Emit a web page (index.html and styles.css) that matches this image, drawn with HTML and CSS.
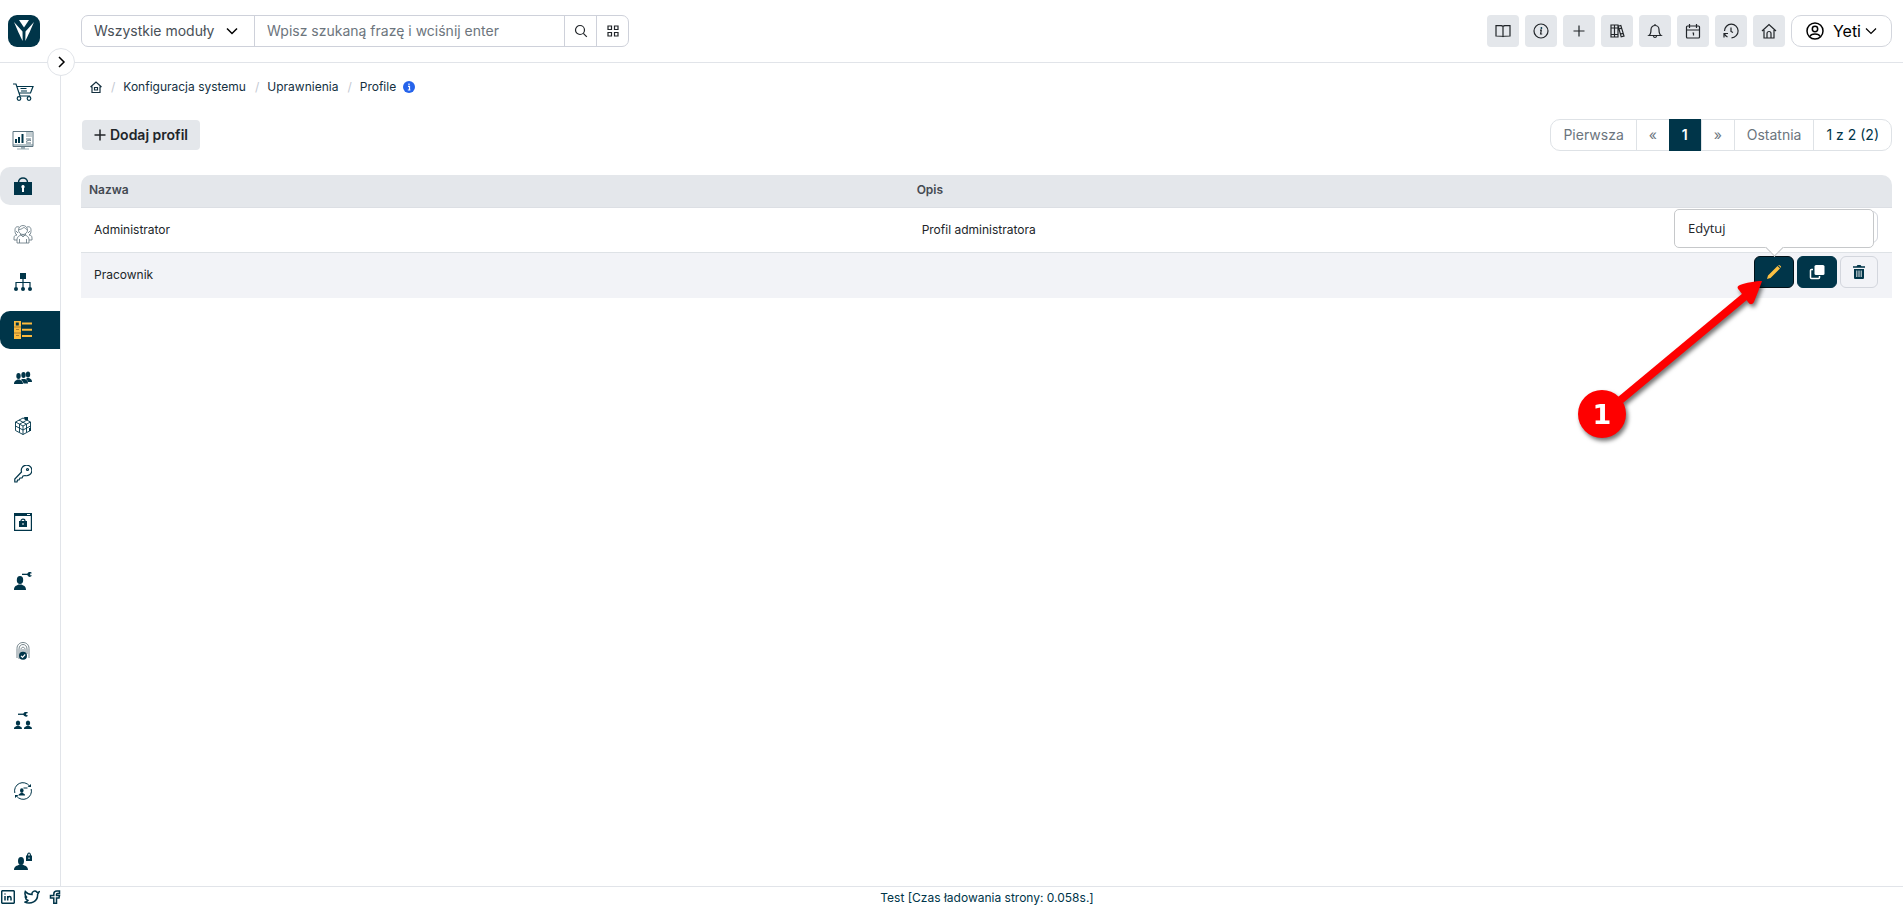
FILE: index.html
```html
<!DOCTYPE html>
<html lang="pl">
<head>
<meta charset="utf-8">
<title>Profile - Yeti</title>
<link rel="stylesheet" href="styles.css">
</head>
<body>
<header class="topbar">
  <a class="brand" href="#" aria-label="Yeti">
    <svg viewBox="0 0 32 32" width="32" height="32"><rect width="32" height="32" rx="9" fill="#003549"/><path d="M11 5h10l-5 7.500z" fill="#fff"/><path d="M6 7l8.500 9.500.2 9.500C12 21 8.500 13 6 7zM26 7l-8.500 9.500-.2 9.500C20 21 23.500 13 26 7z" fill="#fff"/></svg>
  </a>
  <form class="search">
    <div class="select-wrap">
      <select aria-label="Moduł"><option>Wszystkie moduły</option></select>
      <svg class="select-arrow" viewBox="0 0 12 12" width="12" height="12"><path d="M1 3.500l5 5 5-5" class="ln"/></svg>
    </div>
    <input type="text" aria-label="Szukaj" placeholder="Wpisz szukaną frazę i wciśnij enter">
    <button type="button" aria-label="Szukaj"><svg viewBox="0 0 14 14" width="14" height="14"><circle cx="6" cy="6" r="4.500" class="ln thin"/><path d="M9.300 9.300l3.500 3.500" class="ln thin"/></svg></button>
    <button type="button" aria-label="Zaawansowane"><svg viewBox="0 0 12 12" width="12" height="12"><path d="M1 1h3.500v3.500H1zM7.500 1H11v3.500H7.500zM1 7.500h3.500V11H1zM7.500 7.500H11V11H7.500z" class="ln thin"/></svg></button>
  </form>
  <div class="tools">
    <button type="button" aria-label="Podręcznik"><svg viewBox="0 0 16 16" width="16" height="16"><path d="M8 3.500V13.500M8 3.500C7.500 2.500 7 2.500 1 2.500v10.500c6 0 6.500 0 7 .5.500-.5 1-.5 7-.5V2.500C9 2.500 8.500 2.500 8 3.500z" class="ln thin"/></svg></button>
    <button type="button" aria-label="Informacje"><svg viewBox="0 0 16 16" width="16" height="16"><circle cx="8" cy="8" r="7" class="ln thin"/><path d="M7 7.200h1.300L7.600 11h1.600" class="ln thin"/><circle cx="8.400" cy="5" r=".9"/></svg></button>
    <button type="button" aria-label="Dodaj"><svg viewBox="0 0 16 16" width="16" height="16"><path d="M8 2.500v11M2.500 8h11" class="ln thin"/></svg></button>
    <button type="button" aria-label="Biblioteka"><svg viewBox="0 0 16 16" width="16" height="16"><path d="M2 2h3.500v12H2zM5.500 2H9v12H5.500zM2 5h7M2 11.500h7M9.200 3.200l2.600-.8L15 13l-2.800.8zM10 6l2.700-.8M11.200 11.200l3-.8" class="ln thin"/></svg></button>
    <button type="button" aria-label="Powiadomienia"><svg viewBox="0 0 16 16" width="16" height="16"><path d="M2 12.500c2-1.500 2-3 2-6a4 4 0 018 0c0 3 0 4.500 2 6zM6.500 13c.2 2 2.800 2 3 0M8 2.500V1" class="ln thin"/></svg></button>
    <button type="button" aria-label="Kalendarz"><svg viewBox="0 0 16 16" width="16" height="16"><rect x="1.500" y="3" width="13" height="12" rx="1" class="ln thin"/><path d="M1.500 7h13M4.500 1v4M11.500 1v4M7.500 10h1v2.500" class="ln thin"/></svg></button>
    <button type="button" aria-label="Historia"><svg viewBox="0 0 16 16" width="16" height="16"><path d="M1.500 8A6.800 6.800 0 118.500 14.800M8 4.500V8.500l2 1M1 14.500V10.500h4M1.500 11c.7 1.500 1.500 2.300 3 3" class="ln thin"/></svg></button>
    <button type="button" aria-label="Strona główna"><svg viewBox="0 0 16 16" width="16" height="16"><path d="M1 8l7-6.500L15 8M3 7v8h10V7M6 15v-4.500a2 2 0 014 0V15" class="ln thin"/></svg></button>
    <button type="button" class="user">
      <svg viewBox="0 0 18 18" width="18" height="18"><circle cx="9" cy="9" r="8" class="ln"/><circle cx="9" cy="7" r="2.700" class="ln"/><path d="M4 14.500c1-3.500 9-3.500 10 0" class="ln"/></svg>
      <span>Yeti</span>
      <svg class="caret" viewBox="0 0 12 12" width="12" height="12"><path d="M1 3.500l5 5 5-5" class="ln thin"/></svg>
    </button>
  </div>
</header>
<div class="body">
  <nav class="sidebar" aria-label="Menu">
    <button type="button" class="expand" aria-label="Rozwiń menu"><svg viewBox="0 0 12 12" width="12" height="12"><path d="M4 1l5 5-5 5" class="ln"/></svg></button>
    <a href="#" class="root" aria-label="Sklep"><svg viewBox="0 0 22 20" width="22" height="20"><path d="M1 2h3l4 12h10M5 4.500h16L18.500 11H7M8.500 6.500h6M9 9h6" class="ln thin"/><circle cx="7" cy="16.500" r="1.800" class="ln thin"/><circle cx="17" cy="16.500" r="1.800" class="ln thin"/></svg></a>
    <a href="#" class="root" aria-label="Monitorowanie"><svg viewBox="0 0 22 20" width="22" height="20"><path d="M1 14h20v3H1z" fill="#b3c1c7"/><path d="M14 2h6v5h-6z" fill="#c4ced2"/><path d="M1 1.500h20v15H1z" fill="none" stroke="#5d7480"/><path d="M3 9h2v4H3zM6 7h2v6H6zM9.500 4h2v9h-2z"/><path d="M14 9h5M14 13h5M14 11.500l3-1.500 2 .5" fill="none" stroke="#5d7480"/><path d="M9 17h4v2H9zM5 18.500h12v1H5z" fill="#9aabb3"/></svg></a>
    <a href="#" class="section" aria-label="Bezpieczeństwo"><svg viewBox="0 0 18 18" width="18" height="18"><path d="M0 5h18v13H0z"/><path d="M4.500 5.500c0-6 9-6 9 0" class="ln"/><path d="M9 8a1.800 1.800 0 011 3.200V15H8v-3.800A1.800 1.800 0 019 8z" fill="#fff"/></svg></a>
    <a href="#" aria-label="Użytkownicy"><svg viewBox="0 0 20 20" width="20" height="20"><g fill="none" stroke="#60727c" stroke-width=".8"><circle cx="10" cy="6" r="4.500"/><path d="M6 5.500c3 0 4-2 5-2s2 2 3 2M6 3C3 2 2 4 2 6s0 4 2 5M14 3c3-1 4 1 4 3s0 4-2 5M4 19v-3c0-3 2-5 6-5s6 2 6 5v3zM4 16H1v-2c0-2 1-3 3-3M16 16h3v-2c0-2-1-3-3-3M7 10l3 3 3-3M6.500 15v4M13.500 15v4M3 7l2 2M17 7l-2 2"/></g></svg></a>
    <a href="#" aria-label="Role"><svg viewBox="0 0 18 18" width="18" height="18"><path d="M6 0h6v6H6z"/><path d="M9 6v9M2 14.500V9.500h14v5" class="ln thin"/><circle cx="2" cy="16" r="2"/><circle cx="9" cy="16" r="2"/><circle cx="16" cy="16" r="2"/></svg></a>
    <a href="#" class="current" aria-label="Profile"><svg viewBox="0 0 18 18" width="18" height="18"><path d="M0 0h7v18H0zM8 1.500h10v2H8zM8 7.800h10v2H8zM8 14h10v2H8z" fill="#fbb93d"/><path d="M1.800 1.500h3v3h-3z" fill="#003549"/><path d="M0 6h7M0 12h7M2 8.500h3M2 14.500h3" stroke="#a87c33" fill="none"/></svg></a>
    <a href="#" aria-label="Grupy"><svg viewBox="0 0 18 14" width="18" height="14"><ellipse cx="4.500" cy="5" rx="2.200" ry="3"/><ellipse cx="9.500" cy="4" rx="2.200" ry="3"/><ellipse cx="14" cy="3.500" rx="2.200" ry="3"/><path d="M0 13c0-3 2-3.500 3.500-4.500h2C7 9.500 9 10 9 13zM8 8h3c2 1.200 3 2 3 4.500H9.500C9 10 8 9.500 7 9zM13 7h2c2 1 3 1.500 3 4h-4C13.500 9 12.500 8.500 12 8z"/></svg></a>
    <a href="#" aria-label="Moduły"><svg viewBox="0 0 18 18" width="18" height="18"><path d="M9 1l7.500 4v8.500L9 17.500l-7.500-4V5zM1.500 5L9 9l7.500-4M9 9v8.500M5 3l7.500 4.200v8M13 3L5.500 7.200v8M1.500 9L9 13l7.500-4" fill="none" stroke="#003549" stroke-width=".9"/><path d="M10 0h4v3h-3zM15 11h2v3h-2z"/></svg></a>
    <a href="#" aria-label="Klucze"><svg viewBox="0 0 18 18" width="18" height="18"><path d="M7.500 7A5.300 5.300 0 1111 10.500L9 11l-1 2H6l-1 2H3.500L3 17H.8v-3z" class="ln thin"/><circle cx="13.500" cy="4.500" r="1" class="ln thin"/></svg></a>
    <a href="#" aria-label="Blokady"><svg viewBox="0 0 18 18" width="18" height="18"><path d="M.6.6h16.800v16.800H.6z" class="ln thin"/><path d="M0 0h18v3H0zM5 8h8v6H5z"/><path d="M13 1.500h3" stroke="#fff"/><path d="M7 8c0-2.500 4-2.500 4 0" class="ln thin"/><path d="M8.500 10h1v2h-1z" fill="#fff"/></svg></a>
    <a href="#" class="tall" aria-label="Uprawnienia użytkownika"><svg viewBox="0 0 18 18" width="18" height="18"><ellipse cx="6" cy="8" rx="3.200" ry="4"/><path d="M0 18c0-4 2-4 4.500-5.500h3C10 14 12 14 12 18z"/><path d="M8 1.700h6v1.300H8z"/><path d="M18 1.200a2.500 2.500 0 100 2.400l-1.800-.4V1.600z"/></svg></a>
    <a href="#" class="tall" aria-label="Autoryzacja"><svg viewBox="0 0 14 18" width="14" height="18"><g fill="none" stroke="#687981" stroke-width=".9"><path d="M1 16V6.500c0-8 12-8 12 0V16M3 17V7c0-6 8-6 8 0v5M5 12V7.500c0-3 4-3 4 0V11M7 11V7"/></g><circle cx="7" cy="13.800" r="4"/><path d="M5 13.800l1.500 1.500L9.200 12.500" fill="none" stroke="#fff" stroke-width="1.200"/></svg></a>
    <a href="#" class="tall" aria-label="Dostęp grup"><svg viewBox="0 0 18 18" width="18" height="18"><path d="M4 1.600h7v1.300H4z"/><path d="M14 1a2.400 2.400 0 100 2.400l-1.800-.4V1.400z"/><ellipse cx="4" cy="11" rx="2.200" ry="2.500"/><ellipse cx="14" cy="11" rx="2.200" ry="2.500"/><path d="M0 17c0-2.500 2-2.500 4-3.500 2 1 4 1 4 3.500zM10 17c0-2.500 2-2.500 4-3.500 2 1 4 1 4 3.500z"/></svg></a>
    <a href="#" class="tall" aria-label="Przejęcie uprawnień"><svg viewBox="0 0 18 18" width="18" height="18"><path d="M.8 11A8.300 8.300 0 0115.500 4M17.200 7A8.300 8.300 0 012.500 14" fill="none" stroke="#003549"/><path d="M13.500 5H17V2zM4.500 13H1v3z"/><ellipse cx="7.800" cy="8.500" rx="1.800" ry="2.200"/><path d="M4.500 13.500c0-2 2-2 3.300-3 1.300 1 3.300 1 3.300 3zM9.500 5.500h4v1h-4z"/></svg></a>
    <a href="#" class="tall" aria-label="Blokada użytkownika"><svg viewBox="0 0 18 18" width="18" height="18"><ellipse cx="7" cy="9" rx="3" ry="4"/><path d="M0 18c0-4 3-4 5.500-5.500h3C11 14 14 14 14 18zM12 3.500h6V9h-6z"/><path d="M13.500 4c0-4 3-4 3 0" class="ln thin"/><path d="M14.500 5.500h1v1.500h-1z" fill="#fff"/></svg></a>
  </nav>
  <main class="content">
    <nav class="crumbs" aria-label="Ścieżka">
      <a href="#" aria-label="Start"><svg viewBox="0 0 12 12" width="12" height="12"><path d="M.5 6L6 1l5.500 5M2 5.500v6h8v-6M4.500 6.500h3v2.500h-3z" class="ln thin"/></svg></a>
      <i>/</i><a href="#">Konfiguracja systemu</a>
      <i>/</i><a href="#">Uprawnienia</a>
      <i>/</i><span>Profile</span>
      <svg class="info" viewBox="0 0 12 12" width="12" height="12"><circle cx="6" cy="6" r="6"/><path d="M5 5.300h1.500V9M4.800 9h2.600M6 2.400v1.500" fill="none" stroke="#fff" stroke-width="1.200"/></svg>
    </nav>
    <div class="actionbar">
      <button type="button" class="add"><svg viewBox="0 0 12 12" width="12" height="12"><path d="M6 .5v11M.5 6h11" class="ln"/></svg>Dodaj profil</button>
      <div class="pages">
        <button type="button">Pierwsza</button>
        <button type="button" class="step">«</button>
        <button type="button" class="on">1</button>
        <button type="button" class="step">»</button>
        <button type="button">Ostatnia</button>
        <button type="button" class="count">1 z 2 (2)</button>
      </div>
    </div>
    <table class="list">
      <thead><tr><th class="name">Nazwa</th><th>Opis</th><th aria-label="Akcje"></th></tr></thead>
      <tbody>
        <tr><td>Administrator</td><td>Profil administratora</td>
          <td class="actions"><div class="btns">
            <button type="button" class="ghost" aria-label="Usuń"><svg viewBox="0 0 12 14" width="12" height="14"><path d="M0 1.500h3.500L4.500.3h3l1 1.200H12V3H0zM1 4h10v8.500c0 1-.5 1.500-1.500 1.500h-7C1.500 14 1 13.500 1 12.500z"/></svg></button>
          </div></td></tr>
        <tr class="hover"><td>Pracownik</td><td></td>
          <td class="actions"><div class="btns">
            <div class="edit-wrap">
              <button type="button" class="solid focus" aria-label="Edytuj" aria-describedby="tip"><svg viewBox="0 0 16 16" width="16" height="16"><path d="M1 15l1-3.500L11.500 2l2.500 2.500L4.500 14zM12.200 1.300c1-1 4 1.500 2.500 2.500z" fill="#fcc042"/></svg></button>
              <div class="tip" id="tip" role="tooltip">Edytuj</div>
              <svg class="marker" viewBox="0 0 200 180" width="200" height="180"><path d="M48 124L173 20l5 6L53 130z"/><path d="M192 8c-2 6-6 16-8 21-2 3-4 3-6 0l-9-12c-2-2-2-4 1-5 5-2 16-4 22-4z"/><circle cx="32" cy="141" r="24"/><text x="32" y="151" text-anchor="middle">1</text></svg>
            </div>
            <button type="button" class="solid" aria-label="Duplikuj"><svg viewBox="0 0 16 16" width="16" height="16"><rect x="5.500" y="1" width="10" height="10" rx="1.500" fill="#fff"/><path d="M4 5.500H2.500a1 1 0 00-1 1v7a1 1 0 001 1h7a1 1 0 001-1V12" fill="none" stroke="#fff" stroke-width="1.500"/></svg></button>
            <button type="button" class="ghost" aria-label="Usuń"><svg viewBox="0 0 12 14" width="12" height="14"><path d="M0 1.200h3.500L4.500 0h3l1 1.200H12v1.600H0zM1 4h10v8.500c0 1-.5 1.500-1.500 1.500h-7C1.500 14 1 13.500 1 12.500z"/><path d="M3.800 5.500v6.500M6 5.500v6.500M8.200 5.500v6.500" stroke="#fff" stroke-width=".9"/></svg></button>
          </div></td></tr>
      </tbody>
    </table>
  </main>
</div>
<footer class="footer">
  <div class="social">
    <a href="#" aria-label="LinkedIn"><svg viewBox="0 0 14 14" width="14" height="14"><rect x=".7" y=".7" width="12.600" height="12.600" rx="1" class="ln"/><path d="M4 6v4.500M6.700 10.500V6M6.700 8c.5-2 3.300-2 3.300 0v2.500M4 3.500v1" class="ln"/></svg></a>
    <a href="#" aria-label="Twitter"><svg viewBox="0 0 16 14" width="16" height="14"><path d="M15 2c-1 .5-1.500.5-2 .3C11-.1 7.500 1.500 8 4.500 5 4.500 3 3.500 1.300 1.500.5 4 1 6 3 7.500L1.300 7.200C1.500 9 2.500 10 4 10.500c-.5 1-2 1.500-3.500 1.500C7 15 14 11 13.600 4.500z" class="ln"/></svg></a>
    <a href="#" aria-label="Facebook"><svg viewBox="0 0 12 14" width="12" height="14"><path d="M10.500 1H8C5.500 1 4.800 2.500 4.800 4v1.500H1.500V8h3.300v5.300h2.700V8H10l.5-2.500h-3V4.300c0-.6.300-.9 1-.9h2z" class="ln"/></svg></a>
  </div>
  <p>Test [Czas ładowania strony: 0.058s.]</p>
</footer>
</body>
</html>
```

FILE: styles.css
```css
* { box-sizing: border-box; }
body {
  margin: 0;
  height: 100vh;
  display: flex;
  flex-direction: column;
  font: 12px/18px Inter, "Liberation Sans", sans-serif;
  color: #212529;
  background: #fff;
}
button, input, select { font: inherit; color: inherit; margin: 0; }
button { cursor: pointer; }
a { color: inherit; text-decoration: none; }
svg { display: block; flex: none; fill: #003549; }
.ln { fill: none; stroke: currentColor; stroke-width: 1.5; }
.thin { stroke-width: 1.2; }

.topbar {
  display: flex;
  align-items: center;
  height: 63px;
  flex: none;
  padding: 0 11px 0 8px;
  border-bottom: 1px solid #e1e4e9;
}
.brand { margin-right: 41px; }
.search {
  display: flex;
  width: 548px;
  height: 32px;
  border: 1px solid #ced1da;
  border-radius: 7px;
  font-size: 14px;
}
.select-wrap { position: relative; width: 172px; flex: none; }
.select-wrap select {
  width: 100%;
  height: 100%;
  border: 0;
  padding: 0 12px;
  appearance: none;
  background: none;
  color: #495057;
}
.select-arrow { position: absolute; right: 16px; top: 9px; color: #000; pointer-events: none; }
.search input {
  flex: 1;
  min-width: 0;
  border: 0;
  border-left: 1px solid #ced1da;
  padding: 0 12px;
  background: none;
  outline: 0;
}
.search input::placeholder { color: #6c757d; opacity: 1; }
.search button {
  width: 32px;
  padding: 0;
  display: grid;
  place-items: center;
  border: 0;
  border-left: 1px solid #ced1da;
  background: none;
}
.tools { display: flex; gap: 6px; margin-left: auto; }
.tools button {
  width: 32px;
  height: 32px;
  padding: 0;
  display: grid;
  place-items: center;
  border: 0;
  border-radius: 4px;
  background: #e4e7eb;
}
.tools .user {
  display: flex;
  align-items: center;
  width: auto;
  padding: 0 14px;
  border: 1px solid #d3d6dd;
  border-radius: 10px;
  background: #fff;
  font-size: 16px;
  color: #000;
}
.user span { margin: 0 4px 0 9px; }

.body { display: flex; flex: 1; min-height: 0; }
.sidebar {
  position: relative;
  width: 61px;
  flex: none;
  display: flex;
  flex-direction: column;
  gap: 10px;
  padding-top: 8px;
  border-right: 1px solid #e1e4e9;
  color: #003549;
}
.sidebar a {
  display: flex;
  align-items: center;
  justify-content: center;
  height: 38px;
  flex: none;
  padding-right: 14px;
  border-radius: 10px 0 0 10px;
}
.sidebar .root { padding-top: 4px; }
.sidebar .tall { height: 60px; }
.sidebar .section { background: #e4e7eb; }
.sidebar .current { background: #003549; }
.expand {
  position: absolute;
  right: -15px;
  top: -15px;
  width: 28px;
  height: 28px;
  padding: 0;
  display: grid;
  place-items: center;
  border: 1px solid #e1e4e9;
  border-radius: 50%;
  background: #fff;
  color: #000;
}

.content { flex: 1; min-width: 0; padding: 15px 11px 0 20px; }
.crumbs { display: flex; align-items: center; padding-left: 9px; color: #14303f; }
.crumbs i { font-style: normal; color: #c3c8d2; margin: 0 8px 0 9px; }
.crumbs .info { fill: #2563eb; margin-left: 7px; }
.actionbar { display: flex; align-items: center; justify-content: space-between; margin-top: 23px; }
.add {
  display: flex;
  align-items: center;
  gap: 4px;
  height: 30px;
  margin-left: 1px;
  padding: 0 12px;
  border: 0;
  border-radius: 4px;
  background: #e4e7eb;
  font-size: 14px;
  font-weight: 600;
}
.pages {
  display: flex;
  height: 32px;
  border: 1px solid #dee2e6;
  border-radius: 10px;
  font-size: 14px;
}
.pages button {
  border: 0;
  border-left: 1px solid #dee2e6;
  padding: 0 12px;
  background: none;
  color: #6c757d;
}
.pages button:first-child { border-left: 0; }
.pages .step { width: 33px; padding: 0; }
.pages .on { width: 32px; margin: -1px 0; padding: 0; border: 0; background: #003549; color: #fff; font-weight: 600; }
.pages .count { color: #003549; }

.list { width: 100%; margin-top: 24px; border-collapse: separate; border-spacing: 0; table-layout: fixed; }
.list th {
  height: 33px;
  padding: 0 8px 2px;
  text-align: left;
  font-weight: 600;
  color: #444a52;
  background: #e4e7eb;
  border-bottom: 1px solid #dcdfe4;
}
.list th.name { border-top-left-radius: 10px; }
.list th:last-child { border-top-right-radius: 10px; }
.list th.name, .list th:nth-child(2) { width: 45.7%; }
.list td { height: 45px; padding: 0 13px; border-bottom: 1px solid #dee2e6; }
.list .hover td { background: #f2f3f7; border-bottom-color: #f2f3f7; }
.list td.actions { padding: 3px 14px 9px 0; }
.btns { display: flex; justify-content: flex-end; gap: 3px; }
.btns button {
  width: 40px;
  height: 32px;
  padding: 0;
  display: grid;
  place-items: center;
  border: 1px solid #003549;
  border-radius: 6px;
  background: #003549;
}
.btns .focus { border-color: #001018; }
.btns .ghost { width: 38px; border-color: #d3d6dd; background: none; }
.edit-wrap { position: relative; }
.tip {
  position: absolute;
  bottom: 40px;
  left: -80px;
  width: 200px;
  height: 39px;
  padding: 9px 13px;
  border: 1px solid #c6c8ca;
  border-radius: 5px;
  background: #fff;
  font: 13px/18px "Open Sans", "Noto Sans", sans-serif;
}
.tip::after {
  content: "";
  position: absolute;
  left: 93px;
  bottom: -7px;
  width: 12px;
  height: 12px;
  border: solid #c6c8ca;
  border-width: 0 1px 1px 0;
  background: #fff;
  transform: rotate(45deg);
}
.marker {
  position: absolute;
  left: -184px;
  top: 17px;
  fill: #fe0000;
  filter: drop-shadow(2px 3px 2px rgba(0, 0, 0, .55));
  pointer-events: none;
}
.marker text { fill: #fff; font: bold 27px "DejaVu Sans", sans-serif; }

.footer {
  display: flex;
  align-items: center;
  height: 21px;
  flex: none;
  border-top: 1px solid #e1e4e9;
  background: #fff;
  color: #003549;
}
.social { display: flex; justify-content: space-between; align-items: center; width: 63px; padding: 0 2px 0 1px; }
.footer p { flex: 1; margin: 0; padding: 2px 0 0 8px; text-align: center; }
```
